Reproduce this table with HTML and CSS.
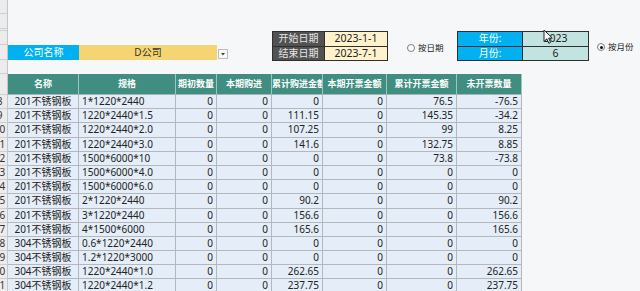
FILE: index.html
```html
<!DOCTYPE html>
<html lang="zh">
<head>
<meta charset="utf-8">
<title>开票统计</title>
<link rel="stylesheet" href="styles.css">
</head>
<body>
<div class="sheet">
  <div class="rh">
    <div class="rh-c h14"></div>
    <div class="rh-c h15"></div>
    <div class="rh-c h2"></div>
    <div class="rh-c h14"></div>
    <div class="rh-c h15"></div>
    <div class="rh-c h14"></div>
    <div class="rh-c h21"></div>
    <div class="rh-c hr"><span>8</span></div>
    <div class="rh-c hr"><span>9</span></div>
    <div class="rh-c hr"><span>10</span></div>
    <div class="rh-c hr"><span>11</span></div>
    <div class="rh-c hr"><span>12</span></div>
    <div class="rh-c hr"><span>13</span></div>
    <div class="rh-c hr"><span>14</span></div>
    <div class="rh-c hr"><span>15</span></div>
    <div class="rh-c hr"><span>16</span></div>
    <div class="rh-c hr"><span>17</span></div>
    <div class="rh-c hr"><span>18</span></div>
    <div class="rh-c hr"><span>19</span></div>
    <div class="rh-c hr"><span>20</span></div>
    <div class="rh-c hr"><span>21</span></div>
  </div>
  <div class="main">
    <div class="top">
      <div class="company">
        <div class="co-label">公司名称</div>
        <div class="co-value">D公司</div>
      </div>
      <div class="dd"><svg width="8" height="8" viewBox="0 0 8 8"><path d="M2 3 L6 3 L4 5.5 Z" fill="#444"/></svg></div>
      <div class="dates">
        <div class="d-label">开始日期</div><div class="d-value">2023-1-1</div>
        <div class="d-label">结束日期</div><div class="d-value">2023-7-1</div>
      </div>
      <div class="radio r1"><span class="circle"></span><span>按日期</span></div>
      <div class="ym">
        <div class="y-label">年份:</div><div class="y-value">2023</div>
        <div class="y-label">月份:</div><div class="y-value">6</div>
      </div>
      <div class="radio r2"><span class="circle on"></span><span>按月份</span></div>
    </div>
    <div class="grid">
      <div class="th">名称</div><div class="th">规格</div><div class="th">期初数量</div><div class="th">本期购进</div><div class="th">累计购进金额</div><div class="th">本期开票金额</div><div class="th">累计开票金额</div><div class="th">未开票数量</div>

      <div class="td c">201不锈钢板</div><div class="td l">1*1220*2440</div><div class="td">0</div><div class="td">0</div><div class="td">0</div><div class="td">0</div><div class="td">76.5</div><div class="td">-76.5</div>
      <div class="td c">201不锈钢板</div><div class="td l">1220*2440*1.5</div><div class="td">0</div><div class="td">0</div><div class="td">111.15</div><div class="td">0</div><div class="td">145.35</div><div class="td">-34.2</div>
      <div class="td c">201不锈钢板</div><div class="td l">1220*2440*2.0</div><div class="td">0</div><div class="td">0</div><div class="td">107.25</div><div class="td">0</div><div class="td">99</div><div class="td">8.25</div>
      <div class="td c">201不锈钢板</div><div class="td l">1220*2440*3.0</div><div class="td">0</div><div class="td">0</div><div class="td">141.6</div><div class="td">0</div><div class="td">132.75</div><div class="td">8.85</div>
      <div class="td c">201不锈钢板</div><div class="td l">1500*6000*10</div><div class="td">0</div><div class="td">0</div><div class="td">0</div><div class="td">0</div><div class="td">73.8</div><div class="td">-73.8</div>
      <div class="td c">201不锈钢板</div><div class="td l">1500*6000*4.0</div><div class="td">0</div><div class="td">0</div><div class="td">0</div><div class="td">0</div><div class="td">0</div><div class="td">0</div>
      <div class="td c">201不锈钢板</div><div class="td l">1500*6000*6.0</div><div class="td">0</div><div class="td">0</div><div class="td">0</div><div class="td">0</div><div class="td">0</div><div class="td">0</div>
      <div class="td c">201不锈钢板</div><div class="td l">2*1220*2440</div><div class="td">0</div><div class="td">0</div><div class="td">90.2</div><div class="td">0</div><div class="td">0</div><div class="td">90.2</div>
      <div class="td c">201不锈钢板</div><div class="td l">3*1220*2440</div><div class="td">0</div><div class="td">0</div><div class="td">156.6</div><div class="td">0</div><div class="td">0</div><div class="td">156.6</div>
      <div class="td c">201不锈钢板</div><div class="td l">4*1500*6000</div><div class="td">0</div><div class="td">0</div><div class="td">165.6</div><div class="td">0</div><div class="td">0</div><div class="td">165.6</div>
      <div class="td c">304不锈钢板</div><div class="td l">0.6*1220*2440</div><div class="td">0</div><div class="td">0</div><div class="td">0</div><div class="td">0</div><div class="td">0</div><div class="td">0</div>
      <div class="td c">304不锈钢板</div><div class="td l">1.2*1220*3000</div><div class="td">0</div><div class="td">0</div><div class="td">0</div><div class="td">0</div><div class="td">0</div><div class="td">0</div>
      <div class="td c">304不锈钢板</div><div class="td l">1220*2440*1.0</div><div class="td">0</div><div class="td">0</div><div class="td">262.65</div><div class="td">0</div><div class="td">0</div><div class="td">262.65</div>
      <div class="td c">304不锈钢板</div><div class="td l">1220*2440*1.2</div><div class="td">0</div><div class="td">0</div><div class="td">237.75</div><div class="td">0</div><div class="td">0</div><div class="td">237.75</div>
    </div>
  </div>
</div>
<svg class="cursor" width="12" height="16" viewBox="0 0 12 16"><path d="M1 1 L1 12.5 L3.8 9.8 L5.8 14.3 L7.6 13.5 L5.6 9.1 L9.3 9.1 Z" fill="#fff" stroke="#222" stroke-width="1" stroke-linejoin="round"/></svg>
</body>
</html>
```

FILE: styles.css
```css
html, body {
  margin: 0;
  padding: 0;
  overflow: hidden;
}
body {
  background: #f6f7f9;
  font-family: "Noto Sans", "Noto Sans CJK SC", sans-serif;
  color: #222;
  width: 640px;
  height: 291px;
  position: relative;
}
.sheet {
  display: flex;
  align-items: flex-start;
}
.rh {
  width: 8px;
  flex: none;
  display: flex;
  flex-direction: column;
  background: #ececec;
  border-right: 1px solid #c6c6c6;
  box-sizing: border-box;
}
.rh-c {
  box-sizing: border-box;
  border-bottom: 1px solid #cfcfcf;
  display: flex;
  justify-content: flex-end;
  overflow: hidden;
  font-size: 10px;
  line-height: 13px;
  color: #333;
}
.rh-c span {
  flex: none;
  width: 15px;
  text-align: center;
}
.h14 { height: 14px; }
.h15 { height: 15px; }
.h2 { height: 2px; }
.h21 { height: 21px; }
.hr { height: 14.2px; }

.main {
  flex: 1;
  display: flex;
  flex-direction: column;
}
.top {
  height: 74px;
  display: flex;
  align-items: flex-start;
}
.company {
  margin-top: 45px;
  display: flex;
  height: 15px;
  font-size: 10px;
  line-height: 15px;
  text-align: center;
}
.co-label {
  width: 71px;
  background: #00b0f0;
  color: #fff;
}
.co-value {
  width: 138px;
  background: #f5d572;
  color: #333;
}
.dd {
  margin-top: 49px;
  margin-left: 1px;
  width: 10px;
  height: 10px;
  box-sizing: border-box;
  border: 1px solid #bdbdbd;
  background: #f8f8f8;
  display: flex;
  align-items: center;
  justify-content: center;
}
.dates {
  margin-top: 31px;
  margin-left: 44px;
  display: grid;
  grid-template-columns: 52px 63px;
  grid-template-rows: 14.5px 14.5px;
  border-top: 1px solid #2f2f2f;
  border-left: 1px solid #2f2f2f;
}
.dates > div, .ym > div {
  box-sizing: border-box;
  border-right: 1px solid #2f2f2f;
  border-bottom: 1px solid #2f2f2f;
  text-align: center;
  font-size: 10px;
  line-height: 13.5px;
}
.d-label {
  background: #525252;
  color: #e6e6e6;
}
.d-value {
  background: #fff2cc;
  color: #222;
  font-size: 10.5px !important;
}
.radio {
  display: flex;
  align-items: center;
  gap: 3px;
  font-size: 8.5px;
  line-height: 10px;
  height: 10px;
  color: #222;
}
.r1 {
  margin-top: 43px;
  margin-left: 19px;
  width: 50px;
}
.r2 {
  margin-top: 42px;
  margin-left: 8px;
}
.circle {
  width: 8px;
  height: 8px;
  box-sizing: border-box;
  border-radius: 50%;
  border: 1px solid #7a7a7a;
  background: #fff;
  flex: none;
  position: relative;
}
.circle.on::after {
  content: "";
  position: absolute;
  left: 1.5px;
  top: 1.5px;
  width: 3px;
  height: 3px;
  border-radius: 50%;
  background: #111;
}
.ym {
  margin-top: 31px;
  display: grid;
  grid-template-columns: 65px 66px;
  grid-template-rows: 14.5px 14.5px;
  border-top: 1px solid #2f2f2f;
  border-left: 1px solid #2f2f2f;
}
.y-label {
  background: #00b0f0;
  color: #fff;
}
.y-value {
  background: #c2e4e0;
  color: #222;
  font-size: 10.5px !important;
}

.grid {
  display: grid;
  grid-template-columns: 71px 97px 41px 55px 51px 64px 70px 65px;
  grid-template-rows: 21px;
  grid-auto-rows: 14.2px;
  width: 514px;
}
.th {
  box-sizing: border-box;
  background: #3f8e81;
  color: #fff;
  font-weight: 700;
  font-size: 9px;
  line-height: 20px;
  text-align: center;
  white-space: nowrap;
  overflow: hidden;
  border-right: 1px solid #9cc5bd;
  border-bottom: 1px solid #a9b3b5;
}
.td {
  box-sizing: border-box;
  background: #e5eef8;
  border-right: 1px solid #b3b8bd;
  border-bottom: 1px solid #b3b8bd;
  font-size: 10px;
  line-height: 13.2px;
  text-align: right;
  padding: 0 3px;
  white-space: nowrap;
  overflow: hidden;
}
.td.c { text-align: center; padding: 0; }
.td.l { text-align: left; }

.cursor {
  position: absolute;
  left: 543px;
  top: 29px;
}
```
